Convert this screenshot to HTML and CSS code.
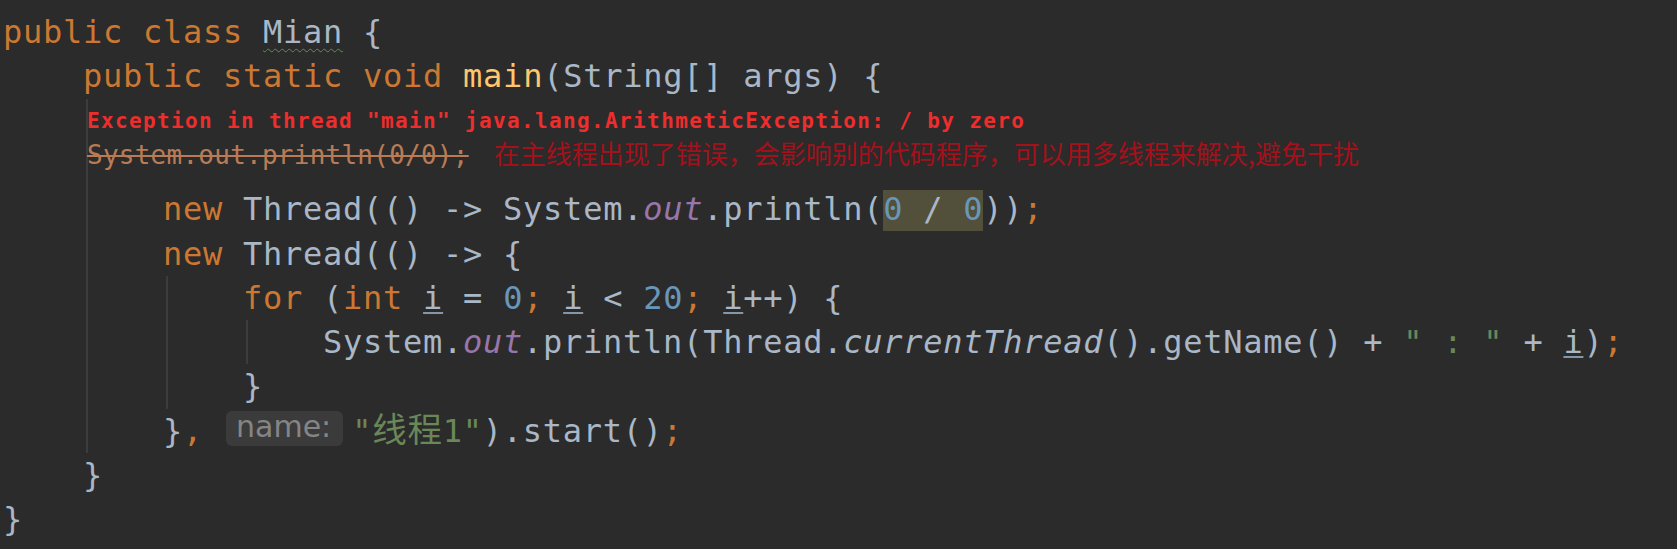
FILE: index.html
```html
<!DOCTYPE html>
<html lang="zh">
<head>
<meta charset="utf-8">
<title>Mian.java</title>
<link rel="stylesheet" href="styles.css">
</head>
<body>
<div class="code">
<div class="ln"><span class="kw">public class </span><span class="typo">Mian</span> {</div>
<div class="ln d1"><span class="kw">public static void </span><span class="fn">main</span>(String[] args) {</div>
<div class="blk b1">
  <div class="ann">
    <div class="exc">Exception in thread "main" java.lang.ArithmeticException: / by zero</div>
    <div class="strk"><span class="del">System.out.println(0/0);</span><span class="note">在主线程出现了错误，会影响别的代码程序，可以用多线程来解决,避免干扰</span></div>
  </div>
  <div class="ln d2"><span class="kw">new </span>Thread(() -&gt; System.<span class="st">out</span>.println(<span class="hl"><span class="num">0</span> / <span class="num">0</span></span>))<span class="kw">;</span></div>
  <div class="ln d2"><span class="kw">new </span>Thread(() -&gt; {</div>
  <div class="blk b2">
    <div class="ln d2"><span class="kw">for </span>(<span class="kw">int </span><u>i</u> = <span class="num">0</span><span class="kw">; </span><u>i</u> &lt; <span class="num">20</span><span class="kw">; </span><u>i</u>++) {</div>
    <div class="blk b3">
      <div class="ln d2">System.<span class="st">out</span>.println(Thread.<i>currentThread</i>().getName() + <span class="str">" : "</span> + <u>i</u>)<span class="kw">;</span></div>
    </div>
    <div class="ln d2">}</div>
  </div>
  <div class="ln d2">}<span class="kw">, </span><span class="hint">name:</span><span class="str">"<span class="cjk">线程</span>1"</span>).start()<span class="kw">;</span></div>
</div>
<div class="ln d1">}</div>
<div class="ln">}</div>
</div>
</body>
</html>
```
FILE: styles.css
```css
html, body {
  margin: 0;
  background: #2b2b2b;
}

.code {
  padding: 10.1px 0 0 3px;
  font-family: "DejaVu Sans Mono", monospace;
  font-size: 32px;
  letter-spacing: 0.74px;
  line-height: 44.3px;
  color: #a9b7c6;
}

.ln {
  white-space: pre;
  height: 44.3px;
}

.d1 { padding-left: 80px; }
.d2 { padding-left: 75px; }

.blk { border-left: 2px solid #3c3c3c; }
.b1 { margin-left: 83px; }
.b2, .b3 { margin-left: 78px; }

.kw { color: #cc7832; }
.fn { color: #ffc66d; }
.num { color: #6897bb; }
.str { color: #6a8759; }
.st { color: #9876aa; font-style: italic; }
i { font-style: italic; }

u {
  text-decoration: underline;
  text-decoration-color: #8796a6;
  text-decoration-thickness: 2px;
  text-underline-offset: 3px;
}

.typo {
  text-decoration: underline wavy #5e8c5e;
  text-decoration-thickness: 1px;
  text-underline-offset: 5px;
}

.hl {
  background: #52503a;
  padding-bottom: 3px;
}

.ann {
  height: 88.6px;
  margin-left: -1px;
}

.exc {
  white-space: pre;
  font-size: 21px;
  font-weight: bold;
  letter-spacing: 1.36px;
  line-height: 44px;
  color: #ee2d2d;
}

.strk {
  white-space: pre;
  font-size: 26px;
  letter-spacing: 0.25px;
  line-height: 24.7px;
}

.del {
  color: #b97b56;
  text-decoration: line-through;
}

.note {
  font-family: "Noto Sans CJK SC", sans-serif;
  letter-spacing: 0;
  line-height: 0;
  margin-left: 25px;
  color: #a3111b;
}

.hint {
  display: inline-block;
  height: 35px;
  padding: 0 12px 0 10px;
  margin: 0 9px 0 3px;
  border-radius: 6px;
  background: #3b3b3b;
  color: #858585;
  font-family: "DejaVu Sans", sans-serif;
  font-size: 30px;
  letter-spacing: 0;
  line-height: 31px;
  vertical-align: 5px;
}

.cjk {
  font-family: "Noto Sans CJK SC", sans-serif;
  font-size: 34.5px;
  letter-spacing: 0.74px;
  line-height: 0;
}
```
